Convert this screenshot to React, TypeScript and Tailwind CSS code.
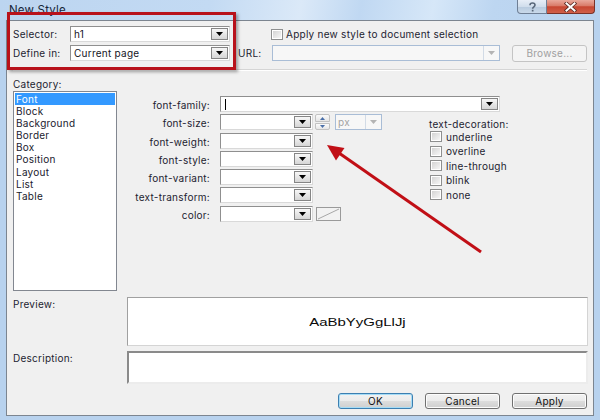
import React from "react";

function Tri({ dim = false }: { dim?: boolean }) {
  return (
    <svg width="7" height="4" viewBox="0 0 7 4" className="block">
      <path d="M0 0H7L3.5 4Z" fill={dim ? "#b4b4b4" : "#000"} />
    </svg>
  );
}

function DropButton() {
  return (
    <div className="w-[17px] my-[1px] mr-[1px] border border-[#858585] bg-gradient-to-b from-[#f7f7f7] to-[#d6d6d6] flex items-center justify-center">
      <Tri />
    </div>
  );
}

function Combo({ width, value, caret = false }: { width: string; value?: string; caret?: boolean }) {
  return (
    <div
      className={`h-[16px] flex items-stretch bg-white border border-t-[#8f8f8f] border-l-[#8f8f8f] border-r-[#d9d9d9] border-b-[#d9d9d9] ${width}`}
    >
      <div className="flex-1 flex items-center pl-[3px] text-[#14141e] whitespace-nowrap">
        {caret && <span className="w-[1px] h-[11px] bg-black ml-[1px]" />}
        {value}
      </div>
      <DropButton />
    </div>
  );
}

function DisabledCombo({ width, value }: { width: string; value?: string }) {
  return (
    <div className={`h-[16px] flex items-stretch bg-[#f7f7f7] border border-[#a9bdd6] ${width}`}>
      <div className="flex-1 flex items-center pl-[2px] text-[#a3a3a3]">{value}</div>
      <div className="w-[16px] border-l border-[#d2dbe6] flex items-center justify-center">
        <Tri dim />
      </div>
    </div>
  );
}

function Check() {
  return (
    <div className="w-[12px] h-[11px] border border-[#8e8f8f] bg-white p-[1px]">
      <div className="w-full h-full bg-gradient-to-br from-[#d4d4d4] to-[#f6f6f6]" />
    </div>
  );
}

function Spinner() {
  return (
    <div className="w-[15px] h-[16px] flex flex-col gap-[1px] ml-[2px]">
      <div className="flex-1 border border-[#c2c2c2] rounded-t-[2px] bg-gradient-to-b from-[#fbfbfb] to-[#e6e6e6] flex items-center justify-center">
        <svg width="5" height="3" viewBox="0 0 5 3" className="block">
          <path d="M0 3H5L2.5 0Z" fill="#4a6fa8" />
        </svg>
      </div>
      <div className="flex-1 border border-[#c2c2c2] rounded-b-[2px] bg-gradient-to-b from-[#fbfbfb] to-[#e6e6e6] flex items-center justify-center">
        <svg width="5" height="3" viewBox="0 0 5 3" className="block">
          <path d="M0 0H5L2.5 3Z" fill="#4a6fa8" />
        </svg>
      </div>
    </div>
  );
}

function Button({ label, primary = false }: { label: string; primary?: boolean }) {
  return (
    <div
      className={
        primary
          ? "w-[75px] h-[16px] rounded-[3px] border border-[#3c7fb1] shadow-[inset_0_0_0_1px_#a6dcf6] bg-[linear-gradient(180deg,#f2f2f2_0%,#ebebeb_50%,#dddddd_51%,#cfcfcf_100%)] flex items-center justify-center text-[#111]"
          : "w-[75px] h-[16px] rounded-[3px] border border-[#707070] shadow-[inset_0_0_0_1px_#fcfcfc] bg-[linear-gradient(180deg,#f2f2f2_0%,#ebebeb_50%,#dddddd_51%,#cfcfcf_100%)] flex items-center justify-center text-[#111]"
      }
    >
      {label}
    </div>
  );
}

const categories = ["Font", "Block", "Background", "Border", "Box", "Position", "Layout", "List", "Table"];
const fontRows = ["font-weight:", "font-style:", "font-variant:", "text-transform:"];
const decorations = ["underline", "overline", "line-through", "blink", "none"];

export default function App() {
  return (
    <div className="relative w-[600px] h-[420px] overflow-hidden bg-[#b8d2ee] font-['Inter',sans-serif] text-[10px] leading-[12px] tracking-[0.25px] text-[#1d1d30] flex flex-col">
      {/* caption */}
      <div className="h-[20px] shrink-0 flex items-start justify-between bg-[linear-gradient(100deg,#bcd5f0_0%,#c3daf3_35%,#dbe9f8_50%,#c0d8f2_60%,#d6e7f8_72%,#bdd6f1_82%,#b8d2ee_100%)]">
        <div className="pl-[9px] pt-[3px] text-[11.5px] leading-[14px] tracking-[0.2px] text-[#17263a]">New Style</div>
        <div className="flex mr-[5px]">
          <div className="w-[30px] h-[14px] rounded-bl-[4px] border border-[#6f7f95] border-t-0 bg-[linear-gradient(180deg,#e7eef7_0%,#d1deec_50%,#b7cade_51%,#c9d9ea_100%)] flex items-center justify-center">
            <svg width="9" height="10" viewBox="0 0 9 10" className="block">
              <path d="M2 3.2C2 1.8 3.1 1 4.5 1S7 1.8 7 3.1c0 1.6-2.4 1.8-2.4 3.6" fill="none" stroke="#59687a" strokeWidth="1.6" />
              <rect x="3.8" y="7.8" width="1.7" height="1.7" fill="#59687a" />
            </svg>
          </div>
          <div className="w-[48px] h-[14px] rounded-br-[4px] border border-[#7a3228] border-t-0 border-l-0 bg-[linear-gradient(180deg,#e9a99c_0%,#d97b69_45%,#c74631_52%,#d0604a_100%)] flex items-center justify-center">
            <svg width="13" height="10" viewBox="0 0 13 10" className="block">
              <path d="M2.5 1.5L10.5 8.5M10.5 1.5L2.5 8.5" stroke="#5a2a22" strokeWidth="3.6" strokeLinecap="square" />
              <path d="M2.5 1.5L10.5 8.5M10.5 1.5L2.5 8.5" stroke="#ffffff" strokeWidth="2" strokeLinecap="square" />
            </svg>
          </div>
        </div>
      </div>

      {/* client area */}
      <div className="mx-[6px] h-[396px] shrink-0 border border-[#7c8590] bg-[#f0f0f0] flex flex-col">
        {/* selector / define in / url */}
        <div className="flex pt-[5px]">
          <div className="pl-[6px] flex flex-col gap-[3px]">
            <div className="flex items-center h-[16px]">
              <div className="w-[57px]">Selector:</div>
              <Combo width="w-[160px]" value="h1" />
            </div>
            <div className="flex items-center h-[16px]">
              <div className="w-[57px]">Define in:</div>
              <Combo width="w-[160px]" value="Current page" />
            </div>
          </div>
          <div className="ml-[8px] flex flex-col gap-[3px]">
            <div className="flex items-center h-[16px] pl-[33px]">
              <Check />
              <span className="ml-[3px]">Apply new style to document selection</span>
            </div>
            <div className="flex items-center h-[16px]">
              <div className="w-[34px]">URL:</div>
              <DisabledCombo width="w-[228px]" />
              <div className="ml-[12px] w-[75px] h-[17px] rounded-[3px] border border-[#c4c4c4] bg-[#f4f4f4] flex items-center justify-center text-[#a0a0a0]">
                Browse...
              </div>
            </div>
          </div>
        </div>

        <div className="mt-[8px] mx-[6px] h-[2px] border-t border-[#d5d5d5] border-b border-b-white" />

        <div className="mt-[7px] pl-[6px] h-[13px] leading-[13px]">Category:</div>

        {/* category list + font properties */}
        <div className="flex">
          <div className="ml-[6px] w-[104px] h-[200px] border border-[#828790] bg-white p-[1px] flex flex-col">
            {categories.map((c, i) => (
              <div
                key={c}
                className={
                  i === 0
                    ? "h-[12.1px] leading-[12.1px] pl-[1px] bg-[#3399ff] text-white"
                    : "h-[12.1px] leading-[12.1px] pl-[1px] text-[#1a1a2e]"
                }
              >
                {c}
              </div>
            ))}
          </div>

          <div className="pt-[5px] flex flex-col">
            <div className="flex items-center h-[18.3px]">
              <div className="w-[93px] text-right">font-family:</div>
              <div className="ml-[10px] self-start">
                <Combo width="w-[280px]" caret />
              </div>
            </div>
            <div className="flex">
              <div className="w-[312px] flex flex-col">
                <div className="flex items-center h-[18.3px]">
                  <div className="w-[93px] text-right">font-size:</div>
                  <div className="ml-[10px] self-start flex items-center">
                    <Combo width="w-[93px]" />
                    <Spinner />
                    <div className="ml-[5px]">
                      <DisabledCombo width="w-[47px]" value="px" />
                    </div>
                  </div>
                </div>
                {fontRows.map((r) => (
                  <div key={r} className="flex items-center h-[18.3px]">
                    <div className="w-[93px] text-right">{r}</div>
                    <div className="ml-[10px] self-start">
                      <Combo width="w-[93px]" />
                    </div>
                  </div>
                ))}
                <div className="flex items-center h-[18.3px]">
                  <div className="w-[93px] text-right">color:</div>
                  <div className="ml-[10px] self-start flex items-center">
                    <Combo width="w-[93px]" />
                    <div className="ml-[3px] w-[25px] h-[14px] border border-[#9a9a9a] bg-[#f2f2f2]">
                      <svg width="23" height="12" viewBox="0 0 23 12" className="block">
                        <path d="M1 11L22 1" stroke="#a8a8a8" strokeWidth="1" />
                      </svg>
                    </div>
                  </div>
                </div>
              </div>

              <div className="pt-[4px] flex flex-col">
                <div className="h-[13px] leading-[13px]">text-decoration:</div>
                <div className="-mt-[2px] flex flex-col">
                  {decorations.map((d) => (
                    <div key={d} className="flex items-center h-[14.5px] pl-[1px]">
                      <Check />
                      <span className="ml-[4px]">{d}</span>
                    </div>
                  ))}
                </div>
              </div>
            </div>
          </div>
        </div>

        {/* preview */}
        <div className="mt-[6px] flex">
          <div className="w-[120px] pl-[6px] pt-[1px]">Preview:</div>
          <div className="w-[461px] h-[49px] border border-t-[#a0a0a0] border-l-[#a0a0a0] border-r-[#d4d4d4] border-b-[#d4d4d4] bg-white flex items-center justify-center">
            <span className="inline-block scale-x-[1.36] font-['Liberation_Sans',sans-serif] text-[11px] tracking-normal text-[#0a0a0a]">
              AaBbYyGgLlJj
            </span>
          </div>
        </div>

        {/* description */}
        <div className="mt-[5px] flex">
          <div className="w-[120px] pl-[6px] pt-[1px]">Description:</div>
          <div className="w-[461px] h-[33px] border-2 border-t-[#8a8a8a] border-l-[#8a8a8a] border-r-[#ececec] border-b-[#ececec] bg-white" />
        </div>

        {/* dialog buttons */}
        <div className="mt-[9px] flex justify-end gap-[12px] pr-[6px]">
          <Button label="OK" primary />
          <Button label="Cancel" />
          <Button label="Apply" />
        </div>
      </div>

      {/* annotation: highlight box and pointer */}
      <div className="absolute left-[7px] top-[12px] w-[229px] h-[58px] border-[3px] border-[#b8121b] shadow-[2px_2px_3px_rgba(0,0,0,0.35)] pointer-events-none" />
      <svg className="absolute inset-0 pointer-events-none" width="600" height="420" viewBox="0 0 600 420">
        <line x1="481" y1="252" x2="339" y2="153" stroke="#c10f16" strokeWidth="3" />
        <polygon points="327,145 344.5,148 336,160.5" fill="#c10f16" />
      </svg>
    </div>
  );
}
